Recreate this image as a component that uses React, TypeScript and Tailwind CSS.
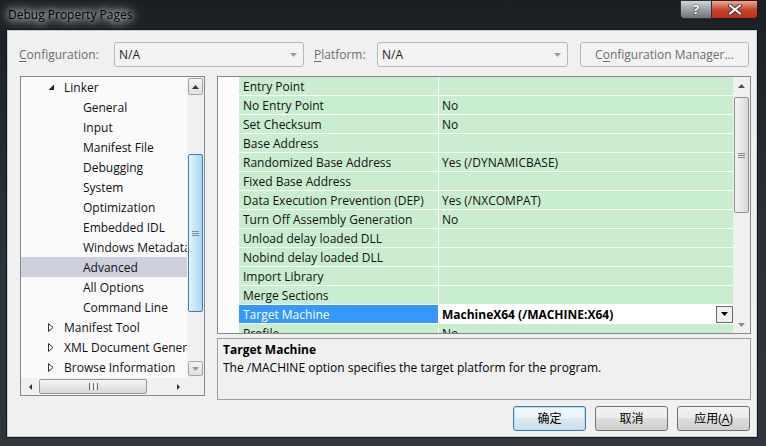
import React from "react";

type Dir = "up" | "down" | "left" | "right";

function Tri({ dir, w, h, fill = "#000" }: { dir: Dir; w: number; h: number; fill?: string }) {
  const pts =
    dir === "up"
      ? `0,${h} ${w / 2},0 ${w},${h}`
      : dir === "down"
      ? `0,0 ${w},0 ${w / 2},${h}`
      : dir === "left"
      ? `${w},0 0,${h / 2} ${w},${h}`
      : `0,0 ${w},${h / 2} 0,${h}`;
  return (
    <svg width={w} height={h} viewBox={`0 0 ${w} ${h}`}>
      <polygon points={pts} fill={fill} />
    </svg>
  );
}

const treeItems = [
  { label: "Linker", level: 0, state: "open" },
  { label: "General", level: 1 },
  { label: "Input", level: 1 },
  { label: "Manifest File", level: 1 },
  { label: "Debugging", level: 1 },
  { label: "System", level: 1 },
  { label: "Optimization", level: 1 },
  { label: "Embedded IDL", level: 1 },
  { label: "Windows Metadata", level: 1 },
  { label: "Advanced", level: 1, selected: true },
  { label: "All Options", level: 1 },
  { label: "Command Line", level: 1 },
  { label: "Manifest Tool", level: 0, state: "closed" },
  { label: "XML Document Generator", level: 0, state: "closed" },
  { label: "Browse Information", level: 0, state: "closed" },
];

const gridRows = [
  { name: "Entry Point", value: "" },
  { name: "No Entry Point", value: "No" },
  { name: "Set Checksum", value: "No" },
  { name: "Base Address", value: "" },
  { name: "Randomized Base Address", value: "Yes (/DYNAMICBASE)" },
  { name: "Fixed Base Address", value: "" },
  { name: "Data Execution Prevention (DEP)", value: "Yes (/NXCOMPAT)" },
  { name: "Turn Off Assembly Generation", value: "No" },
  { name: "Unload delay loaded DLL", value: "" },
  { name: "Nobind delay loaded DLL", value: "" },
  { name: "Import Library", value: "" },
  { name: "Merge Sections", value: "" },
  { name: "Target Machine", value: "MachineX64 (/MACHINE:X64)", selected: true },
  { name: "Profile", value: "No" },
];

function Combo({ width }: { width: string }) {
  return (
    <div className={`${width} flex h-[25px] items-center justify-between rounded-[3px] border border-[#b5b9bd] bg-[#f3f3f3] pl-[4px] pr-[6px]`}>
      <span className="text-[#1e1e1e]">N/A</span>
      <Tri dir="down" w={7} h={4} fill="#9a9a9a" />
    </div>
  );
}

function Grip({ vertical }: { vertical?: boolean }) {
  if (vertical) {
    return (
      <div className="flex gap-[1px]">
        <div className="h-[7px] w-[1px] bg-[#6f6f6f]" />
        <div className="h-[7px] w-[1px] bg-[#fff]" />
        <div className="h-[7px] w-[1px] bg-[#6f6f6f]" />
        <div className="h-[7px] w-[1px] bg-[#fff]" />
        <div className="h-[7px] w-[1px] bg-[#6f6f6f]" />
      </div>
    );
  }
  return (
    <div className="flex flex-col gap-[1px]">
      <div className="h-[1px] w-[7px] bg-[#8a8a8a]" />
      <div className="h-[1px] w-[7px] bg-[#8a8a8a]" />
      <div className="h-[1px] w-[7px] bg-[#8a8a8a]" />
    </div>
  );
}

function TreePanel() {
  return (
    <div className="flex h-[320px] w-[185px] flex-col border border-[#828790] bg-[#fafafa]">
      <div className="flex h-[301px]">
        <div className="flex w-[166px] flex-col overflow-hidden">
          {treeItems.map((it) => (
            <div
              key={it.label}
              className={`flex h-[20px] shrink-0 items-center whitespace-nowrap pt-[1px] text-[#111] ${it.selected ? "bg-[#cdcfdc]" : ""} ${it.level === 0 ? "pl-[27px]" : "pl-[62px]"}`}
            >
              {it.level === 0 && (
                <div className="flex w-[16px] shrink-0 items-center">
                  {it.state === "open" ? (
                    <svg width="7" height="7" viewBox="0 0 7 7">
                      <polygon points="6,0.5 6,6 0.5,6" fill="#222" />
                    </svg>
                  ) : (
                    <svg width="6" height="9" viewBox="0 0 6 9">
                      <polygon points="0.5,0.5 5,4.5 0.5,8.5" fill="#fff" stroke="#333" strokeWidth="1" />
                    </svg>
                  )}
                </div>
              )}
              <span className="shrink-0">{it.label}</span>
            </div>
          ))}
        </div>
        <div className="flex w-[17px] flex-col bg-[#f0f0f0]">
          <div className="mx-[1px] mt-[1px] flex h-[17px] items-center justify-center rounded-[2px] border border-[#a4a4a4] bg-linear-to-b from-[#f5f5f5] to-[#dedede]">
            <Tri dir="up" w={7} h={4} fill="#333" />
          </div>
          <div className="flex flex-1 flex-col">
            <div className="mx-[1px] mt-[59px] flex h-[158px] items-center justify-center rounded-[2px] border border-[#3c7fb1] bg-linear-to-r from-[#e3f4fc] via-[#c4e6f8] to-[#a9d9f2]">
              <Grip />
            </div>
          </div>
          <div className="mx-[1px] mb-[2px] flex h-[15px] items-center justify-center rounded-[2px] border border-[#a4a4a4] bg-linear-to-b from-[#f5f5f5] to-[#dedede]">
            <Tri dir="down" w={7} h={4} fill="#9a9a9a" />
          </div>
        </div>
      </div>
      <div className="flex h-[17px]">
        <div className="flex flex-1 items-center bg-[#f0f0f0]">
          <div className="flex w-[18px] justify-center">
            <Tri dir="left" w={3} h={6} fill="#333" />
          </div>
          <div className="flex h-[15px] w-[108px] items-center justify-center rounded-[2px] border border-[#979797] bg-linear-to-b from-[#f4f4f4] to-[#d9d9d9]">
            <Grip vertical />
          </div>
          <div className="flex-1" />
          <div className="flex w-[17px] justify-center">
            <Tri dir="right" w={3} h={6} fill="#333" />
          </div>
        </div>
        <div className="w-[17px] bg-[#f0f0f0]" />
      </div>
    </div>
  );
}

function GridPanel() {
  return (
    <div className="flex h-[258px] w-[534px] border border-[#828790] bg-[#fcfcfc]">
      <div className="w-[21px]" />
      <div className="flex flex-1 flex-col overflow-hidden">
        {gridRows.map((r) => (
          <div key={r.name} className="flex h-[19px] shrink-0 border-b border-white whitespace-nowrap">
            <div
              className={`flex w-[200px] items-center border-r border-white pl-[4px] pt-[2px] ${r.selected ? "bg-[#3399ff] text-white" : "bg-[#c9edcf] text-[#111]"}`}
            >
              {r.name}
            </div>
            {r.selected ? (
              <div className="flex flex-1 items-center justify-between bg-white pl-[3px]">
                <span className="pt-[2px] font-bold text-black">{r.value}</span>
                <div className="flex h-[17px] w-[17px] items-center justify-center border border-[#6a6a6a] bg-[#f0f0f0]">
                  <Tri dir="down" w={7} h={4} fill="#000" />
                </div>
              </div>
            ) : (
              <div className="flex flex-1 items-center bg-[#c9edcf] pl-[3px] pt-[2px] text-[#111]">{r.value}</div>
            )}
          </div>
        ))}
      </div>
      <div className="flex w-[17px] flex-col bg-[#f0f0f0]">
        <div className="flex h-[17px] items-center justify-center">
          <Tri dir="up" w={7} h={4} fill="#555" />
        </div>
        <div className="flex flex-1 flex-col">
          <div className="mx-[1px] mt-[3px] flex h-[116px] items-center justify-center rounded-[2px] border border-[#8e8f8f] bg-linear-to-r from-[#f3f3f3] via-[#e8e8e8] to-[#d6d6d6]">
            <Grip />
          </div>
        </div>
        <div className="flex h-[17px] items-center justify-center">
          <Tri dir="down" w={7} h={4} fill="#888" />
        </div>
      </div>
    </div>
  );
}

function Button({ children, focused }: { children: React.ReactNode; focused?: boolean }) {
  return (
    <div
      className={`flex h-[25px] w-[73px] items-center justify-center rounded-[3px] border text-black ${
        focused
          ? "border-[#3c7fb1] bg-[linear-gradient(#f4f9fc,#e9f3f9_50%,#dbe8f1_50%,#cfdfea)] shadow-[inset_0_0_0_1px_#b9dcf2]"
          : "border-[#707070] bg-[linear-gradient(#f2f2f2,#ebebeb_50%,#dddddd_50%,#cfcfcf)]"
      }`}
    >
      {children}
    </div>
  );
}

export default function App() {
  return (
    <div className="flex h-[446px] w-[766px] flex-col overflow-hidden bg-linear-to-b from-[#1b1f24] via-[#2a3036] to-[#30363c] font-['Open_Sans','Noto_Sans_CJK_SC',sans-serif] text-[12px] leading-none">
      {/* title bar */}
      <div className="flex h-[30px] shrink-0 items-start justify-between">
        <div className="pl-[8px] pt-[9px] text-[12px] text-black [text-shadow:0_0_6px_#fff,0_0_12px_#fff,0_0_18px_#ccc]">
          Debug Property Pages
        </div>
        <div className="mr-[8px] flex">
          <div className="flex h-[19px] w-[32px] items-center justify-center rounded-bl-[4px] border border-[#2b3036] bg-linear-to-b from-[#d2d6da] via-[#9aa1a7] to-[#6c747b] text-[13px] font-bold text-white [text-shadow:0_0_2px_#000]">
            ?
          </div>
          <div className="flex h-[19px] w-[46px] items-center justify-center rounded-br-[4px] border border-l-0 border-[#3b1209] bg-linear-to-b from-[#e7a898] via-[#c7452b] to-[#b83418]">
            <svg width="14" height="11" viewBox="0 0 14 11">
              <path d="M2 1.5 L12 9.5 M12 1.5 L2 9.5" stroke="#3a3a3a" strokeWidth="4" strokeLinecap="round" />
              <path d="M2 1.5 L12 9.5 M12 1.5 L2 9.5" stroke="#fff" strokeWidth="2.2" strokeLinecap="round" />
            </svg>
          </div>
        </div>
      </div>

      {/* client area */}
      <div className="mb-[9px] ml-[7px] mr-[9px] flex flex-1 flex-col border border-[#c9ced2] bg-[#f0f0f0] shadow-[0_0_0_1px_#12161a]">
        {/* configuration row */}
        <div className="ml-[11px] mt-[11px] flex h-[25px] items-center">
          <div className="w-[95px] pt-[1px] text-[#6d6d6d]">
            <span className="underline underline-offset-2">C</span>onfiguration:
          </div>
          <Combo width="w-[190px]" />
          <div className="ml-[10px] w-[63px] pt-[1px] text-[#6d6d6d]">
            <span className="underline underline-offset-2">P</span>latform:
          </div>
          <Combo width="w-[191px]" />
          <div className="ml-[12px] flex h-[25px] w-[169px] items-center justify-center rounded-[3px] border border-[#b5b9bd] bg-[#f3f3f3] text-[#6d6d6d]">
            C<span className="underline underline-offset-2">o</span>nfiguration Manager...
          </div>
        </div>

        {/* main */}
        <div className="ml-[12px] mt-[9px] flex h-[322px] items-start gap-[12px]">
          <TreePanel />
          <div className="flex flex-col">
            <GridPanel />
            <div className="mt-[4px] h-[62px] w-[534px] border border-[#a0a0a0] bg-[#f0f0f0] pl-[5px] pt-[2px] leading-[18px] text-black">
              <div className="font-bold">Target Machine</div>
              <div>The /MACHINE option specifies the target platform for the program.</div>
            </div>
          </div>
        </div>

        {/* buttons */}
        <div className="mr-[6px] mt-[8px] flex justify-end gap-[9px]">
          <Button focused>确定</Button>
          <Button>取消</Button>
          <Button>
            应用(<span className="underline underline-offset-2">A</span>)
          </Button>
        </div>
      </div>
    </div>
  );
}
